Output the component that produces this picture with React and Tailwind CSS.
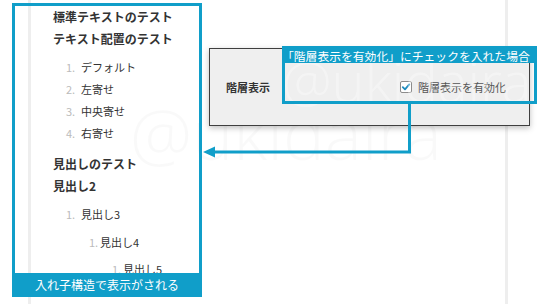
import React from 'react';

const ListItem = ({ num, numWidth, indent, children }) => (
  <li className="flex items-center h-[22px]" style={{ marginLeft: indent }}>
    <span className="text-[#bbbbbb] text-[11px]" style={{ width: numWidth }}>{num}</span>
    <span className="text-[11px] text-[#333]">{children}</span>
  </li>
);

const App = () => {
  return (
    <div className="relative w-[540px] h-[304px] overflow-hidden bg-white text-[#333] font-['Noto_Sans_CJK_JP','Noto_Sans',sans-serif]">
      {/* page column borders */}
      <div className="absolute inset-y-0 left-[28px] w-[3px] bg-[#eeeeee]" />
      <div className="absolute inset-y-0 left-[505px] w-[3px] bg-[#eeeeee]" />

      {/* watermark (lower) */}
      <div aria-hidden="true" className="absolute left-[130px] top-[98px] text-[70px] leading-none font-light text-black/[0.022] font-['Open_Sans',sans-serif] whitespace-nowrap">
        @ukidaira
      </div>

      <div className="relative flex pt-[3px] pl-[12px]">
        {/* Left: nested list preview */}
        <div className="w-[190px] h-[294px] flex flex-col">
          <div className="flex-1 overflow-hidden border-[3px] border-b-0 border-[#109ec9]">
            <div className="pl-[38px]">
              <p className="text-[12px] font-bold leading-[22px]">標準テキストのテスト</p>
              <p className="text-[12px] font-bold leading-[22px]">テキスト配置のテスト</p>
              <ol className="mt-[6px] ml-[13px]">
                <ListItem num="1." numWidth={15}>デフォルト</ListItem>
                <ListItem num="2." numWidth={15}>左寄せ</ListItem>
                <ListItem num="3." numWidth={15}>中央寄せ</ListItem>
                <ListItem num="4." numWidth={15}>右寄せ</ListItem>
              </ol>
              <p className="mt-[9px] text-[12px] font-bold leading-[22px]">見出しのテスト</p>
              <p className="text-[12px] font-bold leading-[22px]">見出し2</p>
              <ol className="mt-[6px]">
                <ListItem num="1." numWidth={15} indent={13}>見出し3</ListItem>
                <li className="mt-[6px]">
                  <ol>
                    <ListItem num="1." numWidth={11} indent={36}>見出し4</ListItem>
                    <li className="mt-[5px]">
                      <ol>
                        <ListItem num="1." numWidth={11} indent={59}>見出し5</ListItem>
                      </ol>
                    </li>
                  </ol>
                </li>
              </ol>
            </div>
          </div>
          <div className="h-[24px] bg-[#109ec9] text-white text-[12px] flex items-center justify-center">
            入れ子構造で表示がされる
          </div>
        </div>

        {/* Right: settings panel */}
        <div className="ml-[7px] mt-[45px] w-[321px] h-[78px] border border-[#3f3f3f] bg-[#efefef] shadow-[0_2px_6px_rgba(0,0,0,0.25)] flex items-center pl-[16px]">
          <span className="w-[174px] text-[11px] font-bold text-[#333]">階層表示</span>
          <span className="flex items-center gap-[6px]">
            <span className="w-[12px] h-[12px] rounded-[2px] border border-[#8c8c8c] bg-white flex items-center justify-center">
              <svg width="10" height="10" viewBox="0 0 10 10">
                <path d="M1.8 5.2 L4 7.4 L8.3 2.4" fill="none" stroke="#1e8cbe" strokeWidth="1.8" strokeLinecap="round" strokeLinejoin="round" />
              </svg>
            </span>
            <span className="text-[11px] text-[#555]">階層表示を有効化</span>
          </span>
        </div>
      </div>

      {/* watermark (upper, over panel) */}
      <div aria-hidden="true" className="absolute left-[282px] top-[52px] text-[56px] leading-none font-light text-white/35 font-['Open_Sans',sans-serif] whitespace-nowrap pointer-events-none">
        @ukidaira
      </div>

      {/* callout */}
      <div className="absolute left-[282px] top-[46px] w-[255px] h-[58px] border-[3px] border-[#109ec9]">
        <div className="h-[14px] bg-[#109ec9] text-white text-[11.8px] leading-[14px] whitespace-nowrap -ml-[3px]">
          「階層表示を有効化」にチェックを入れた場合
        </div>
      </div>

      {/* connector arrow */}
      <svg className="absolute left-0 top-0 pointer-events-none" width="540" height="304" viewBox="0 0 540 304">
        <polyline points="409.5,104 409.5,152 213,152" fill="none" stroke="#109ec9" strokeWidth="3" />
        <polygon points="203,152 215,146.5 215,157.5" fill="#109ec9" />
      </svg>
    </div>
  );
};

export default App;
